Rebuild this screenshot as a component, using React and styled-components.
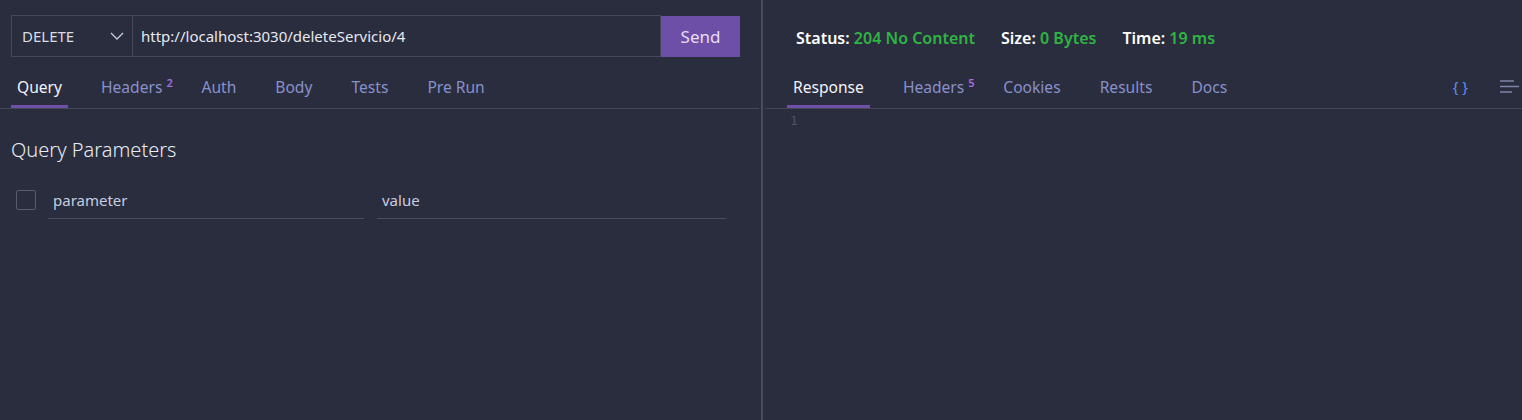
import React from "react";
import styled, { createGlobalStyle } from "styled-components";

const GlobalStyle = createGlobalStyle`
	html, body {
		margin: 0;
		padding: 0;
		background: #2a2d3e;
	}
	body {
		font-family: "Noto Sans", "Open Sans", sans-serif;
	}
`;

const Page = styled.div`
	display: flex;
	height: 420px;
	background: #2a2d3e;
	color: #e4e6ef;
	overflow: hidden;
`;

const LeftPane = styled.div`
	width: 761px;
	flex-shrink: 0;
	display: flex;
	flex-direction: column;
`;

const Divider = styled.div`
	width: 2px;
	background: #4a4c59;
	flex-shrink: 0;
`;

const RightPane = styled.div`
	flex: 1;
	display: flex;
	flex-direction: column;
	padding-left: 2px;
`;

const UrlBar = styled.div`
	display: flex;
	height: 42px;
	margin: 15px 21px 0 11px;
`;

const MethodSelect = styled.div`
	width: 122px;
	box-sizing: border-box;
	border: 1px solid #464857;
	display: flex;
	align-items: center;
	justify-content: space-between;
	padding: 0 8px 0 10px;
	font-size: 15px;
	color: #d9dce6;
`;

const UrlInput = styled.div`
	flex: 1;
	box-sizing: border-box;
	border: 1px solid #464857;
	border-left: none;
	display: flex;
	align-items: center;
	padding-left: 8px;
	font-size: 15px;
	color: #e6e8f0;
`;

const SendButton = styled.button`
	width: 79px;
	border: none;
	margin-top: 1px;
	background: #6e4fa7;
	color: #e6def5;
	font-family: inherit;
	font-size: 17px;
	padding: 0;
`;

const TabRow = styled.div`
	display: flex;
	height: 51px;
	align-items: flex-end;
	gap: 27px;
	border-bottom: 1px solid #464856;
	padding-left: ${(p) => p.$inset}px;
	margin-right: ${(p) => p.$trim || 0}px;
`;

const Tab = styled.div`
	position: relative;
	padding: 0 6px 7px;
	font-size: 15.6px;
	color: ${(p) => (p.$active ? "#f2f3f8" : "#8791cc")};
	border-bottom: 3px solid ${(p) => (p.$active ? "#6f4fa8" : "transparent")};
`;

const Count = styled.span`
	position: absolute;
	top: 1px;
	left: calc(100% - 2px);
	font-size: 11px;
	line-height: 11px;
	color: #a26ee0;
	font-weight: 600;
`;

const TabTools = styled.div`
	margin-left: auto;
	display: flex;
	align-items: center;
	gap: 32px;
	padding-bottom: 12px;
	padding-right: 3px;
`;

const Braces = styled.span`
	font-size: 15px;
	color: #5b8ff0;
`;

const Body = styled.div`
	padding: 0 11px;
`;

const SectionTitle = styled.div`
	font-size: 20px;
	font-weight: 300;
	color: #e9ebf2;
	margin-top: 27px;
`;

const ParamRow = styled.div`
	display: flex;
	align-items: center;
	margin-top: 27px;
	margin-left: 5px;
`;

const CheckBox = styled.div`
	width: 20px;
	height: 20px;
	box-sizing: border-box;
	border: 1px solid #5a5c69;
	border-radius: 2px;
	margin-right: 12px;
	margin-top: -9px;
`;

const ParamField = styled.div`
	width: ${(p) => p.$width}px;
	box-sizing: border-box;
	border-bottom: 1px solid #4a4d5c;
	padding: 0 5px 8px;
	margin-right: 13px;
	font-size: 15px;
	color: #c7cce0;
`;

const StatusBar = styled.div`
	display: flex;
	gap: 26px;
	height: 57px;
	align-items: center;
	padding: 18px 0 0 31px;
	box-sizing: border-box;
	font-size: 16px;
	font-weight: 600;
`;

const StatLabel = styled.span`
	color: #ffffff;
`;

const StatValue = styled.span`
	color: #2fb344;
`;

const LineNumber = styled.div`
	font-family: "DejaVu Sans Mono", monospace;
	font-size: 13px;
	color: #4c5170;
	padding: 4px 0 0 25px;
`;

const HamburgerIcon = () => (
	<svg width="19" height="13" viewBox="0 0 19 13">
		<path d="M0 1h14M0 6.5h19M0 12h12" stroke="#7d84a8" strokeWidth="1.5" />
	</svg>
);

const Chevron = () => (
	<svg width="14" height="8" viewBox="0 0 14 8">
		<path d="M1 1l6 6 6-6" stroke="#c9ccd8" strokeWidth="1.3" fill="none" />
	</svg>
);

const requestTabs = [
	{ name: "Query", active: true },
	{ name: "Headers", count: 2 },
	{ name: "Auth" },
	{ name: "Body" },
	{ name: "Tests" },
	{ name: "Pre Run" },
];

const responseTabs = [
	{ name: "Response", active: true },
	{ name: "Headers", count: 5 },
	{ name: "Cookies" },
	{ name: "Results" },
	{ name: "Docs" },
];

const renderTabs = (tabs) =>
	tabs.map((t) => (
		<Tab key={t.name} $active={t.active}>
			{t.name}
			{t.count && <Count>{t.count}</Count>}
		</Tab>
	));

const App = () => {
	return (
		<>
			<GlobalStyle />
			<Page>
				<LeftPane>
					<UrlBar>
						<MethodSelect>
							DELETE
							<Chevron />
						</MethodSelect>
						<UrlInput>http://localhost:3030/deleteServicio/4</UrlInput>
						<SendButton>Send</SendButton>
					</UrlBar>
					<TabRow $inset={11} $trim={2}>
						{renderTabs(requestTabs)}
					</TabRow>
					<Body>
						<SectionTitle>Query Parameters</SectionTitle>
						<ParamRow>
							<CheckBox />
							<ParamField $width={316}>parameter</ParamField>
							<ParamField $width={349}>value</ParamField>
						</ParamRow>
					</Body>
				</LeftPane>
				<Divider />
				<RightPane>
					<StatusBar>
						<span>
							<StatLabel>Status: </StatLabel>
							<StatValue>204 No Content</StatValue>
						</span>
						<span>
							<StatLabel>Size: </StatLabel>
							<StatValue>0 Bytes</StatValue>
						</span>
						<span>
							<StatLabel>Time: </StatLabel>
							<StatValue>19 ms</StatValue>
						</span>
					</StatusBar>
					<TabRow $inset={22}>
						{renderTabs(responseTabs)}
						<TabTools>
							<Braces>{"{ }"}</Braces>
							<HamburgerIcon />
						</TabTools>
					</TabRow>
					<LineNumber>1</LineNumber>
				</RightPane>
			</Page>
		</>
	);
};

export default App;
